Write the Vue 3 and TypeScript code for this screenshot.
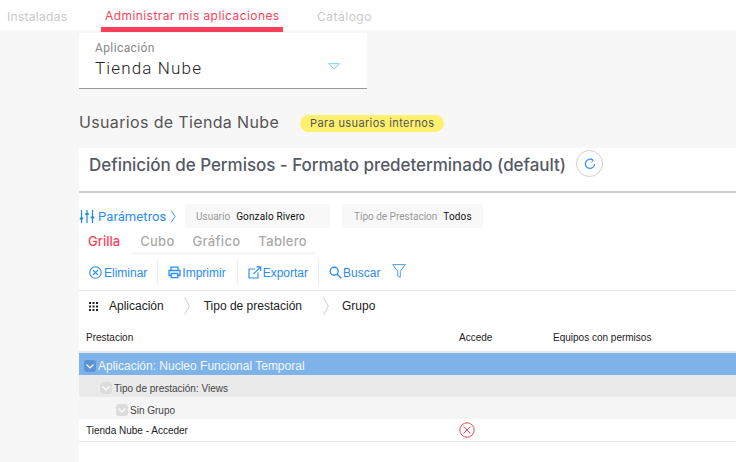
<script setup lang="ts">
const tabs = ['Grilla', 'Cubo', 'Gráfico', 'Tablero']
</script>

<template>
  <div class="page">
    <nav class="top">
      <span class="t t1">Instaladas</span>
      <span class="t active">Administrar mis aplicaciones</span>
      <span class="t t3">Catálogo</span>
    </nav>
    <main class="main">
      <section class="selector">
        <div class="sel-label">Aplicación</div>
        <div class="sel-row">
          <span class="sel-value">Tienda Nube</span>
          <svg class="caret" width="12" height="7" viewBox="0 0 12 7"><path d="M.7.7h10.600L6 6.200z" fill="none" stroke="#6fd3ee" stroke-width="1"/></svg>
        </div>
      </section>
      <div class="heading">
        <h2>Usuarios de Tienda Nube</h2>
        <span class="pill">Para usuarios internos</span>
      </div>
      <section class="panel">
        <div class="title-row">
          <h1>Definición de Permisos - Formato predeterminado (default)</h1>
          <button class="refresh" aria-label="Actualizar">
            <svg width="12" height="12" viewBox="0 0 12 12" fill="none" stroke="#3b93f0" stroke-width="1.3"><path d="M8.900 2.200A4.600 4.600 0 1 0 10.600 6"/><path d="M6.900 .6 9.200 2.200 7.500 4.400" stroke-width="1"/></svg>
          </button>
        </div>
        <div class="params">
          <span class="plink">
            <svg width="16" height="15" viewBox="0 0 16 15" fill="none" stroke="#1e88f0" stroke-width="1.2"><path d="M2.500 1v13M8 1v13M13.500 1v13"/><path d="M.8 9.500h3.400M6.300 5h3.400M11.800 8.500h3.400" stroke-width="2"/></svg>
            Parámetros
            <svg class="pchev" width="6" height="13" viewBox="0 0 6 13" fill="none" stroke="#3b93f0"><path d="M1 .5 5 6.500 1 12.500"/></svg>
          </span>
          <span class="chip c1"><i>Usuario</i><b>Gonzalo Rivero</b></span>
          <span class="chip c2"><i>Tipo de Prestacion</i><b>Todos</b></span>
        </div>
        <div class="views">
          <span v-for="(t, i) in tabs" :key="t" :class="['view', { on: i === 0 }]">{{ t }}</span>
        </div>
        <div class="toolbar">
          <span class="tool first">
            <svg width="13" height="13" viewBox="0 0 13 13" fill="none" stroke="#2f8ef0" stroke-width="1.1"><circle cx="6.500" cy="6.500" r="5.700"/><path d="M4 4l5 5M9 4l-5 5"/></svg>
            Eliminar
          </span>
          <span class="tool second">
            <svg width="13" height="13" viewBox="0 0 13 13" fill="none" stroke="#2f8ef0" stroke-width="1.3"><path d="M3 4V1.200h7V4M3 9.500H1V4.500h11v5h-2"/><path d="M3.200 7.500h6.600v4.200H3.200z"/></svg>
            Imprimir
          </span>
          <span class="tool">
            <svg width="14" height="13" viewBox="0 0 14 13" fill="none" stroke="#2f8ef0" stroke-width="1.2"><path d="M7 3H1v9h9V6.500"/><path d="M5.500 8 12.500 1M8.500 .8h4.200V5"/></svg>
            Exportar
          </span>
          <span class="tool last">
            <svg width="13" height="13" viewBox="0 0 13 13" fill="none" stroke="#2f8ef0" stroke-width="1.4"><circle cx="5.200" cy="5.200" r="4"/><path d="M8 8l4.300 4.300"/></svg>
            Buscar
          </span>
          <svg class="funnel" width="14" height="14" viewBox="0 0 14 14" fill="none" stroke="#4d9ff0" stroke-width="1"><path d="M.6 .6h12.800L8.300 7.200v6.100L5.700 12V7.200z"/></svg>
        </div>
        <div class="groups">
          <svg class="grid-ic" width="9" height="9" viewBox="0 0 9 9" fill="#222"><path d="M0 0h2v2H0zM3.500 0h2v2h-2zM7 0h2v2H7zM0 3.500h2v2H0zM3.500 3.500h2v2h-2zM7 3.500h2v2H7zM0 7h2v2H0zM3.500 7h2v2h-2zM7 7h2v2H7z"/></svg>
          <span class="g1">Aplicación</span>
          <svg class="chev" width="6" height="18" viewBox="0 0 6 18" fill="none" stroke="#ccc"><path d="M.6 .5 5.300 9 .6 17.500"/></svg>
          <span class="g2">Tipo de prestación</span>
          <svg class="chev c-b" width="6" height="18" viewBox="0 0 6 18" fill="none" stroke="#ccc"><path d="M.6 .5 5.300 9 .6 17.500"/></svg>
          <span class="g3">Grupo</span>
        </div>
        <div class="thead">
          <span class="col-a">Prestacion</span>
          <span class="col-b">Accede</span>
          <span class="col-c">Equipos con permisos</span>
        </div>
        <div class="row r1">
          <span class="exp e1"><svg width="8" height="5" viewBox="0 0 8 5" fill="none" stroke="#fff" stroke-width="1.100"><path d="M.5.5 4 4 7.500.5"/></svg></span>
          Aplicación: Nucleo Funcional Temporal
        </div>
        <div class="row r2">
          <span class="exp e2"><svg width="8" height="5" viewBox="0 0 8 5" fill="none" stroke="#fff" stroke-width="1.100"><path d="M.5.5 4 4 7.500.5"/></svg></span>
          Tipo de prestación: Views
        </div>
        <div class="row r3">
          <span class="exp e2"><svg width="8" height="5" viewBox="0 0 8 5" fill="none" stroke="#fff" stroke-width="1.100"><path d="M.5.5 4 4 7.500.5"/></svg></span>
          Sin Grupo
        </div>
        <div class="row r4">
          <span class="col-a">Tienda Nube - Acceder</span>
          <svg class="x-ic" width="16" height="16" viewBox="0 0 16 16" fill="none" stroke="#ea4f5c"><circle cx="8" cy="8" r="7.200"/><path d="M4.500 4.500l7 7M11.500 4.500l-7 7"/></svg>
        </div>
      </section>
    </main>
  </div>
</template>

<style>
html, body { margin: 0; background: #f7f7f7; }
</style>

<style scoped>
.page { width: 736px; height: 462px; overflow: hidden; background: #f7f7f7; font-family: "Liberation Sans", sans-serif; }
.top { height: 30px; background: #fff; display: flex; font-family: "Inter", sans-serif; font-size: 12px; position: relative; }
.t { color: #c9c9c9; line-height: 33px; letter-spacing: .3px; }
.t1 { margin-left: 7px; width: 94px; }
.active { width: 182px; box-sizing: border-box; border-bottom: 5px solid #fb3f5a; color: #fb3f5a; padding-left: 4px; line-height: 32px; height: 32px; white-space: nowrap; letter-spacing: .43px; }
.t3 { margin-left: 34px; letter-spacing: .5px; }
.main { margin-left: 79px; }
.selector { width: 288px; height: 56px; margin-top: 3px; background: #fff; border-bottom: 1px solid #999; box-sizing: border-box; padding: 8px 16px 0; border-radius: 2px 2px 0 0; font-family: Roboto, sans-serif; }
.sel-label { font-size: 12px; line-height: 14px; color: #888; letter-spacing: .4px; }
.sel-row { display: flex; justify-content: space-between; align-items: center; padding-right: 11px; margin-top: 2px; }
.sel-value { font-size: 17px; font-weight: 300; line-height: 22px; color: #222; letter-spacing: 1.15px; }
.caret { margin-top: -4px; }
.heading { display: flex; align-items: center; height: 26px; margin-top: 20px; }
.heading h2 { margin: 0; font: 400 16px "Inter", sans-serif; color: #555; width: 221px; white-space: nowrap; letter-spacing: .35px; }
.pill { background: #fdf06e; color: #555; font: 11px/17px "Inter", sans-serif; border-radius: 9px; padding: 0 10px; height: 17px; width: 144px; box-sizing: border-box; white-space: nowrap; letter-spacing: .37px; margin-top: 3px; }
.panel { background: #fff; height: 314px; margin-top: 13px; overflow: hidden; }
.title-row { height: 41px; border-bottom: 2px solid #cccccf; display: flex; align-items: flex-start; padding: 2px 0 0 10px; }
.title-row h1 { margin: 4px 0 0; font: 500 17px/22px "Inter", sans-serif; color: #555a66; white-space: nowrap; width: 487px; letter-spacing: -.04px; }
.refresh { width: 27px; height: 27px; border-radius: 50%; border: 1px solid #d0d0d0; background: #fff; padding: 0; display: flex; align-items: center; justify-content: center; }
.params { display: flex; align-items: center; height: 24px; margin-top: 11px; }
.plink { display: flex; align-items: center; gap: 3px; font: 13px Roboto, sans-serif; color: #2b8bf0; width: 106px; white-space: nowrap; letter-spacing: .1px; }
.pchev { margin-left: 1px; }
.chip { height: 24px; background: #f8f8f8; border-radius: 3px; display: flex; align-items: center; font-size: 10px; box-sizing: border-box; font-family: Roboto, sans-serif; }
.chip i { font-style: normal; color: #999; }
.chip b { font-weight: 400; color: #111; letter-spacing: .15px; }
.c1 { width: 145px; padding-left: 11px; }
.c1 b { margin-left: 6px; }
.c2 { width: 141px; margin-left: 12px; padding-left: 12px; }
.c2 b { margin-left: 6px; }
.views { display: flex; height: 27px; margin-left: 9px; font: 500 13px/26px "Inter", sans-serif; color: #aaa; letter-spacing: .3px; }
.view { box-sizing: border-box; height: 27px; padding: 0 8px 0 10px; border-bottom: 3px solid #f7f7f7; white-space: nowrap; }
.view.on { color: #fb3f5a; padding: 0 10px 0 0; border-bottom-color: transparent; letter-spacing: 0; }
.toolbar { height: 35px; display: flex; align-items: center; border-bottom: 1px solid #e8e8e8; font: 12px "Liberation Sans", sans-serif; color: #2b8bf0; }
.tool { display: flex; align-items: center; gap: 1px; height: 25px; padding: 0 10px; border-right: 1px solid #ececec; white-space: nowrap; }
.tool.first { gap: 2px; }
.tool.second { padding-right: 11px; }
.tool.last { border: 0; padding-right: 6px; }
.funnel { margin-left: 6px; margin-top: -3px; }
.groups { display: flex; align-items: center; height: 30px; font: 12px "Liberation Sans", sans-serif; color: #222; }
.grid-ic { margin-left: 10px; }
.g1 { margin-left: 11px; }
.chev { margin-left: 20px; }
.g2 { margin-left: 14px; }
.c-b { margin-left: 21px; }
.g3 { margin-left: 13px; }
.thead { height: 28px; padding-top: 2px; display: flex; align-items: center; font-size: 10px; color: #222; border-bottom: 2px solid #e8e8e8; }
.col-a { margin-left: 7px; width: 373px; }
.col-b { width: 94px; }
.row { display: flex; align-items: center; box-sizing: border-box; }
.r1 { height: 22px; padding-top: 4px; background: #7eb3ea; color: #f4f8fd; font-size: 12px; padding-left: 5px; gap: 2px; }
.r2 { height: 22px; padding-top: 4px; background: #eaeaea; color: #444; font-size: 10px; padding-left: 21px; gap: 2px; }
.r3 { height: 22px; padding-top: 4px; background: #f5f5f5; color: #444; font-size: 10px; padding-left: 37px; gap: 2px; }
.r4 { height: 23px; border-bottom: 1px solid #e8e8e8; font-size: 10px; color: #222; }
.r4 .col-a { width: 373px; }
.exp { width: 12px; height: 12px; border-radius: 3px; display: flex; align-items: center; justify-content: center; }
.e1 { background: #5a94d6; }
.e2 { background: #dcdcdc; }
.x-ic { display: block; }
</style>
